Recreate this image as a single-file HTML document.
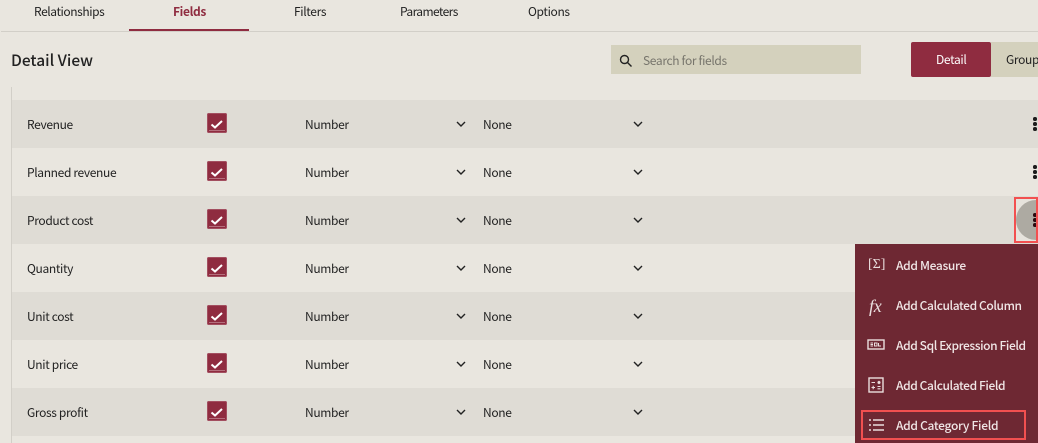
<!DOCTYPE html>
<html><head><meta charset="utf-8"><style>
html,body{margin:0;padding:0;width:1038px;height:443px;overflow:hidden;background:#e9e6df}
body{position:relative;font-family:"Noto Sans CJK JP","Liberation Sans",sans-serif;font-size:12px;color:#222;letter-spacing:-.35px}
.a{position:absolute;white-space:nowrap}
.t{line-height:16px;height:16px}
.row{position:absolute;left:12px;width:1026px;height:48px}
.dark{background:#dfdcd5}
.cb{position:absolute;left:195px;top:13px;width:20px;height:20px;background:#8f2c40;border-radius:2px;box-shadow:inset 0 0 0 1px #a34f60}
.cb svg{position:absolute;left:0;top:0}
.row .t{position:absolute;top:17px}
.chev{position:absolute;top:21px}
.dots{position:absolute;left:1021px;top:17px;width:4px}
.dots i{display:block;width:3.6px;height:3.6px;border-radius:50%;background:#1b1b1b;margin-bottom:1.4px}
.m{position:absolute;left:896px;color:#f0e6e6;line-height:16px;letter-spacing:-.33px;font-weight:500}
</style></head><body>
<div class="a t" style="left:34px;top:4px;letter-spacing:-.42px">Relationships</div>
<div class="a t" style="left:173px;top:4px;color:#8f2c40;font-weight:700">Fields</div>
<div class="a t" style="left:294px;top:4px">Filters</div>
<div class="a t" style="left:400px;top:4px;letter-spacing:-.6px">Parameters</div>
<div class="a t" style="left:528px;top:4px">Options</div>
<div class="a" style="left:1px;top:31px;width:1037px;height:1px;background:#d2cfc8"></div>
<div class="a" style="left:129px;top:29px;width:120px;height:2px;background:#8f2c40"></div>
<div class="a" style="left:11px;top:50px;font-size:15.5px;line-height:20px;font-weight:500;letter-spacing:0;color:#222">Detail View</div>
<div class="a" style="left:611px;top:45px;width:250px;height:29px;background:#d4d1bd"></div>
<svg class="a" style="left:619px;top:54px" width="14" height="14" viewBox="0 0 14 14" fill="none" stroke="#222" stroke-width="1.4"><circle cx="5.5" cy="5.5" r="4"/><path d="M8.5 8.5L12.5 12.5"/></svg>
<div class="a t" style="left:643px;top:53px;color:#77756c">Search for fields</div>
<div class="a" style="left:911px;top:42px;width:80px;height:35px;background:#8f2c40;border-radius:2px"></div>
<div class="a t" style="left:936px;top:52px;color:#fff">Detail</div>
<div class="a" style="left:991px;top:42px;width:47px;height:35px;background:#d4d1bd"></div>
<div class="a t" style="left:1006px;top:52px;color:#222">Group</div>
<div class="a" style="left:11px;top:87px;width:1px;height:356px;background:#d2cfc8"></div>

<div class="row dark" style="top:100px"><span class="t" style="left:15px">Revenue</span><div class="cb"><svg width="20" height="20" fill="none"><path d="M4.5 11.5L8 14.5L15 8" stroke="#fff" stroke-width="2"/><path d="M2 17.5H18" stroke="#b56f7d"/></svg></div><span class="t" style="left:293px">Number</span><svg class="chev" style="left:444px" width="10" height="6" fill="none"><path d="M1 1L5 5L9 1" stroke="#222" stroke-width="1.4"/></svg><span class="t" style="left:471px">None</span><svg class="chev" style="left:621px" width="10" height="6" fill="none"><path d="M1 1L5 5L9 1" stroke="#222" stroke-width="1.4"/></svg><div class="dots"><i></i><i></i><i></i></div></div>
<div class="row" style="top:148px"><span class="t" style="left:15px">Planned revenue</span><div class="cb"><svg width="20" height="20" fill="none"><path d="M4.5 11.5L8 14.5L15 8" stroke="#fff" stroke-width="2"/><path d="M2 17.5H18" stroke="#b56f7d"/></svg></div><span class="t" style="left:293px">Number</span><svg class="chev" style="left:444px" width="10" height="6" fill="none"><path d="M1 1L5 5L9 1" stroke="#222" stroke-width="1.4"/></svg><span class="t" style="left:471px">None</span><svg class="chev" style="left:621px" width="10" height="6" fill="none"><path d="M1 1L5 5L9 1" stroke="#222" stroke-width="1.4"/></svg><div class="dots"><i></i><i></i><i></i></div></div>
<div class="row dark" style="top:196px"><span class="t" style="left:15px">Product cost</span><div class="cb"><svg width="20" height="20" fill="none"><path d="M4.5 11.5L8 14.5L15 8" stroke="#fff" stroke-width="2"/><path d="M2 17.5H18" stroke="#b56f7d"/></svg></div><span class="t" style="left:293px">Number</span><svg class="chev" style="left:444px" width="10" height="6" fill="none"><path d="M1 1L5 5L9 1" stroke="#222" stroke-width="1.4"/></svg><span class="t" style="left:471px">None</span><svg class="chev" style="left:621px" width="10" height="6" fill="none"><path d="M1 1L5 5L9 1" stroke="#222" stroke-width="1.4"/></svg></div>
<div class="row" style="top:244px"><span class="t" style="left:15px">Quantity</span><div class="cb"><svg width="20" height="20" fill="none"><path d="M4.5 11.5L8 14.5L15 8" stroke="#fff" stroke-width="2"/><path d="M2 17.5H18" stroke="#b56f7d"/></svg></div><span class="t" style="left:293px">Number</span><svg class="chev" style="left:444px" width="10" height="6" fill="none"><path d="M1 1L5 5L9 1" stroke="#222" stroke-width="1.4"/></svg><span class="t" style="left:471px">None</span><svg class="chev" style="left:621px" width="10" height="6" fill="none"><path d="M1 1L5 5L9 1" stroke="#222" stroke-width="1.4"/></svg></div>
<div class="row dark" style="top:292px"><span class="t" style="left:15px">Unit cost</span><div class="cb"><svg width="20" height="20" fill="none"><path d="M4.5 11.5L8 14.5L15 8" stroke="#fff" stroke-width="2"/><path d="M2 17.5H18" stroke="#b56f7d"/></svg></div><span class="t" style="left:293px">Number</span><svg class="chev" style="left:444px" width="10" height="6" fill="none"><path d="M1 1L5 5L9 1" stroke="#222" stroke-width="1.4"/></svg><span class="t" style="left:471px">None</span><svg class="chev" style="left:621px" width="10" height="6" fill="none"><path d="M1 1L5 5L9 1" stroke="#222" stroke-width="1.4"/></svg></div>
<div class="row" style="top:340px"><span class="t" style="left:15px">Unit price</span><div class="cb"><svg width="20" height="20" fill="none"><path d="M4.5 11.5L8 14.5L15 8" stroke="#fff" stroke-width="2"/><path d="M2 17.5H18" stroke="#b56f7d"/></svg></div><span class="t" style="left:293px">Number</span><svg class="chev" style="left:444px" width="10" height="6" fill="none"><path d="M1 1L5 5L9 1" stroke="#222" stroke-width="1.4"/></svg><span class="t" style="left:471px">None</span><svg class="chev" style="left:621px" width="10" height="6" fill="none"><path d="M1 1L5 5L9 1" stroke="#222" stroke-width="1.4"/></svg></div>
<div class="row dark" style="top:388px"><span class="t" style="left:15px">Gross profit</span><div class="cb"><svg width="20" height="20" fill="none"><path d="M4.5 11.5L8 14.5L15 8" stroke="#fff" stroke-width="2"/><path d="M2 17.5H18" stroke="#b56f7d"/></svg></div><span class="t" style="left:293px">Number</span><svg class="chev" style="left:444px" width="10" height="6" fill="none"><path d="M1 1L5 5L9 1" stroke="#222" stroke-width="1.4"/></svg><span class="t" style="left:471px">None</span><svg class="chev" style="left:621px" width="10" height="6" fill="none"><path d="M1 1L5 5L9 1" stroke="#222" stroke-width="1.4"/></svg></div>

<div class="a" style="left:1014px;top:197px;width:24px;height:46px;overflow:hidden;box-sizing:border-box;border:2px solid #f25050;background:#e6e3dc"><div style="position:absolute;left:0;top:1px;width:40px;height:40px;border-radius:50%;background:#adaaa2"></div><div style="position:absolute;left:17px;top:14px;width:4px"><div style="width:3.6px;height:3.6px;background:#2a0a10;border-radius:50%;margin-bottom:1.4px"></div><div style="width:3.6px;height:3.6px;background:#2a0a10;border-radius:50%;margin-bottom:1.4px"></div><div style="width:3.6px;height:3.6px;background:#2a0a10;border-radius:50%"></div></div></div>

<div class="a" style="left:855px;top:244px;width:183px;height:199px;background:#6e2833"></div>
<div class="m" style="top:258px">Add Measure</div>
<div class="m" style="top:298px;letter-spacing:-.4px">Add Calculated Column</div>
<div class="m" style="top:338px;letter-spacing:-.4px">Add Sql Expression Field</div>
<div class="m" style="top:378px;letter-spacing:-.4px">Add Calculated Field</div>
<div class="m" style="top:418px;letter-spacing:-.3px">Add Category Field</div>
<div class="a" style="left:868px;top:257px;color:#eadede;font-size:14px;line-height:16px;letter-spacing:0;font-family:'Liberation Serif',serif">[Σ]</div>
<div class="a" style="left:869px;top:295px;color:#eadede;font-size:18px;line-height:22px;letter-spacing:-.3px;font-style:italic;font-family:'Liberation Serif',serif">fx</div>
<svg class="a" style="left:867px;top:339px" width="18" height="12" fill="none"><rect x="1" y="1" width="16" height="9" stroke="#eadede" stroke-width="1.4"/><path d="M3.5 4H6M3.5 5.5H6M3.5 7H6M7.5 4H10V7H7.5ZM11.5 4V7H14" stroke="#eadede" stroke-width="1"/></svg>
<svg class="a" style="left:868px;top:377px" width="16" height="16" fill="none" stroke="#eadede"><rect x="1" y="1" width="14" height="14" stroke-width="1.4"/><path d="M3.5 5.5H7M9.5 5.5H12.5M3.5 10.5H7M5.2 8.8V12.2M9.5 9.5H12.5M9.5 11.8H12.5M10 4L12 7M12 4L10 7" stroke-width="1.1"/></svg>
<svg class="a" style="left:868px;top:418px" width="17" height="14" fill="none" stroke="#eadede" stroke-width="1.6"><path d="M1 2H3M5 2H16M1 7H3M5 7H16M1 12H3M5 12H16"/></svg>
<div class="a" style="left:861px;top:410px;width:165px;height:30px;box-sizing:border-box;border:2px solid #f25050"></div>
</body></html>
